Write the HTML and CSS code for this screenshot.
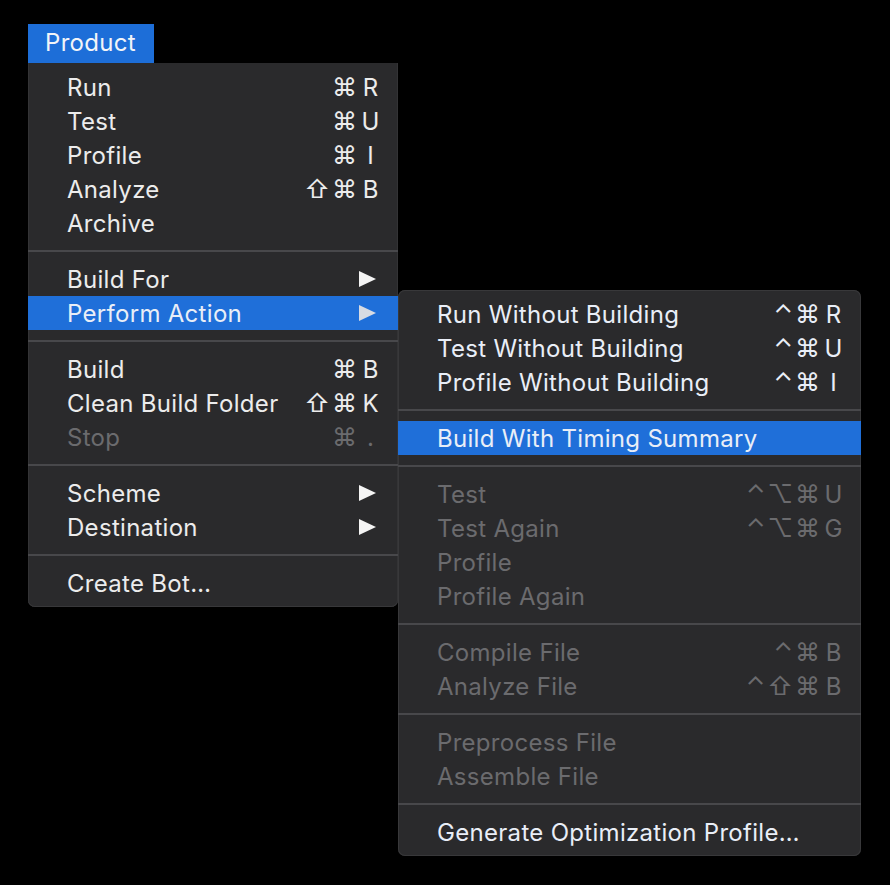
FILE: index.html
```html
<!DOCTYPE html>
<html>
<head>
<meta charset="utf-8">
<link rel="stylesheet" href="styles.css">
</head>
<body>
<div class="stage">
  <div class="tab">Product</div>
  <div class="menu main">
    <div class="item"><span class="label">Run</span><span class="sc"><span class="mods">⌘</span><span class="key">R</span></span></div>
    <div class="item"><span class="label">Test</span><span class="sc"><span class="mods">⌘</span><span class="key">U</span></span></div>
    <div class="item"><span class="label">Profile</span><span class="sc"><span class="mods">⌘</span><span class="key">I</span></span></div>
    <div class="item"><span class="label">Analyze</span><span class="sc"><span class="mods">⇧⌘</span><span class="key">B</span></span></div>
    <div class="item"><span class="label">Archive</span></div>
    <div class="sep"></div>
    <div class="item"><span class="label">Build For</span><span class="arrow"></span></div>
    <div class="item active"><span class="label">Perform Action</span><span class="arrow"></span>
      <div class="menu sub">
        <div class="item"><span class="label">Run Without Building</span><span class="sc"><span class="mods">⌃⌘</span><span class="key">R</span></span></div>
        <div class="item"><span class="label">Test Without Building</span><span class="sc"><span class="mods">⌃⌘</span><span class="key">U</span></span></div>
        <div class="item"><span class="label">Profile Without Building</span><span class="sc"><span class="mods">⌃⌘</span><span class="key">I</span></span></div>
        <div class="sep"></div>
        <div class="item active"><span class="label">Build With Timing Summary</span></div>
        <div class="sep"></div>
        <div class="item disabled"><span class="label">Test</span><span class="sc"><span class="mods">⌃⌥⌘</span><span class="key">U</span></span></div>
        <div class="item disabled"><span class="label">Test Again</span><span class="sc"><span class="mods">⌃⌥⌘</span><span class="key">G</span></span></div>
        <div class="item disabled"><span class="label">Profile</span></div>
        <div class="item disabled"><span class="label">Profile Again</span></div>
        <div class="sep"></div>
        <div class="item disabled"><span class="label">Compile File</span><span class="sc"><span class="mods">⌃⌘</span><span class="key">B</span></span></div>
        <div class="item disabled"><span class="label">Analyze File</span><span class="sc"><span class="mods">⌃⇧⌘</span><span class="key">B</span></span></div>
        <div class="sep"></div>
        <div class="item disabled"><span class="label">Preprocess File</span></div>
        <div class="item disabled"><span class="label">Assemble File</span></div>
        <div class="sep"></div>
        <div class="item"><span class="label">Generate Optimization Profile…</span></div>
      </div>
    </div>
    <div class="sep"></div>
    <div class="item"><span class="label">Build</span><span class="sc"><span class="mods">⌘</span><span class="key">B</span></span></div>
    <div class="item"><span class="label">Clean Build Folder</span><span class="sc"><span class="mods">⇧⌘</span><span class="key">K</span></span></div>
    <div class="item disabled"><span class="label">Stop</span><span class="sc"><span class="mods">⌘</span><span class="key">.</span></span></div>
    <div class="sep"></div>
    <div class="item"><span class="label">Scheme</span><span class="arrow"></span></div>
    <div class="item"><span class="label">Destination</span><span class="arrow"></span></div>
    <div class="sep"></div>
    <div class="item"><span class="label">Create Bot…</span></div>
  </div>
</div>
</body>
</html>
```

FILE: styles.css
```css
html, body {
  margin: 0;
  padding: 0;
  background: #000;
}
body {
  width: 890px;
  height: 885px;
  overflow: hidden;
  font-family: Inter, "Noto Sans", "DejaVu Sans", sans-serif;
  font-size: 24px;
  letter-spacing: 0.3px;
  color: #ececec;
}
.stage {
  padding: 24px 0 0 28px;
}
.tab {
  width: 109px;
  height: 39px;
  line-height: 38px;
  padding-left: 17px;
  background: #1d6ed8;
  color: #f2f4f8;
}
.menu {
  background: #2a2a2c;
  box-sizing: border-box;
  padding: 7px 0;
}
.main {
  width: 370px;
  border-radius: 0 0 7px 7px;
  box-shadow: inset 0 -1px 0 #38383a, inset 1px 0 0 #333335, inset -1px 0 0 #333335;
}
.sub {
  position: absolute;
  left: 100%;
  top: -6px;
  width: 463px;
  border-radius: 7px;
  box-shadow: inset 0 0 0 1px #38383a;
  z-index: 2;
}
.item {
  position: relative;
  height: 34px;
  display: flex;
  align-items: center;
  padding: 0 16px 0 39px;
  white-space: nowrap;
}
.label {
  flex: 1;
}
.item.active {
  background: #1f6fd9;
  color: #e9eef7;
}
.item.disabled {
  color: #6b6b6e;
}
.sc {
  display: flex;
  align-items: center;
}
.mods {
  font-family: Inter, "DejaVu Sans", sans-serif;
  font-size: 25px;
  letter-spacing: 2px;
  margin-right: 0;
}
.key {
  width: 23px;
  text-align: center;
  letter-spacing: 0;
}
.arrow {
  width: 0;
  height: 0;
  margin-right: 6px;
  border-top: 8px solid transparent;
  border-bottom: 8px solid transparent;
  border-left: 17px solid #f4f4f4;
}
.item.active > .arrow {
  border-left-color: #d7dbe3;
}
.sep {
  height: 22px;
  display: flex;
  align-items: center;
}
.sep::before {
  content: "";
  display: block;
  width: 100%;
  height: 2px;
  background: #48484b;
}
```
